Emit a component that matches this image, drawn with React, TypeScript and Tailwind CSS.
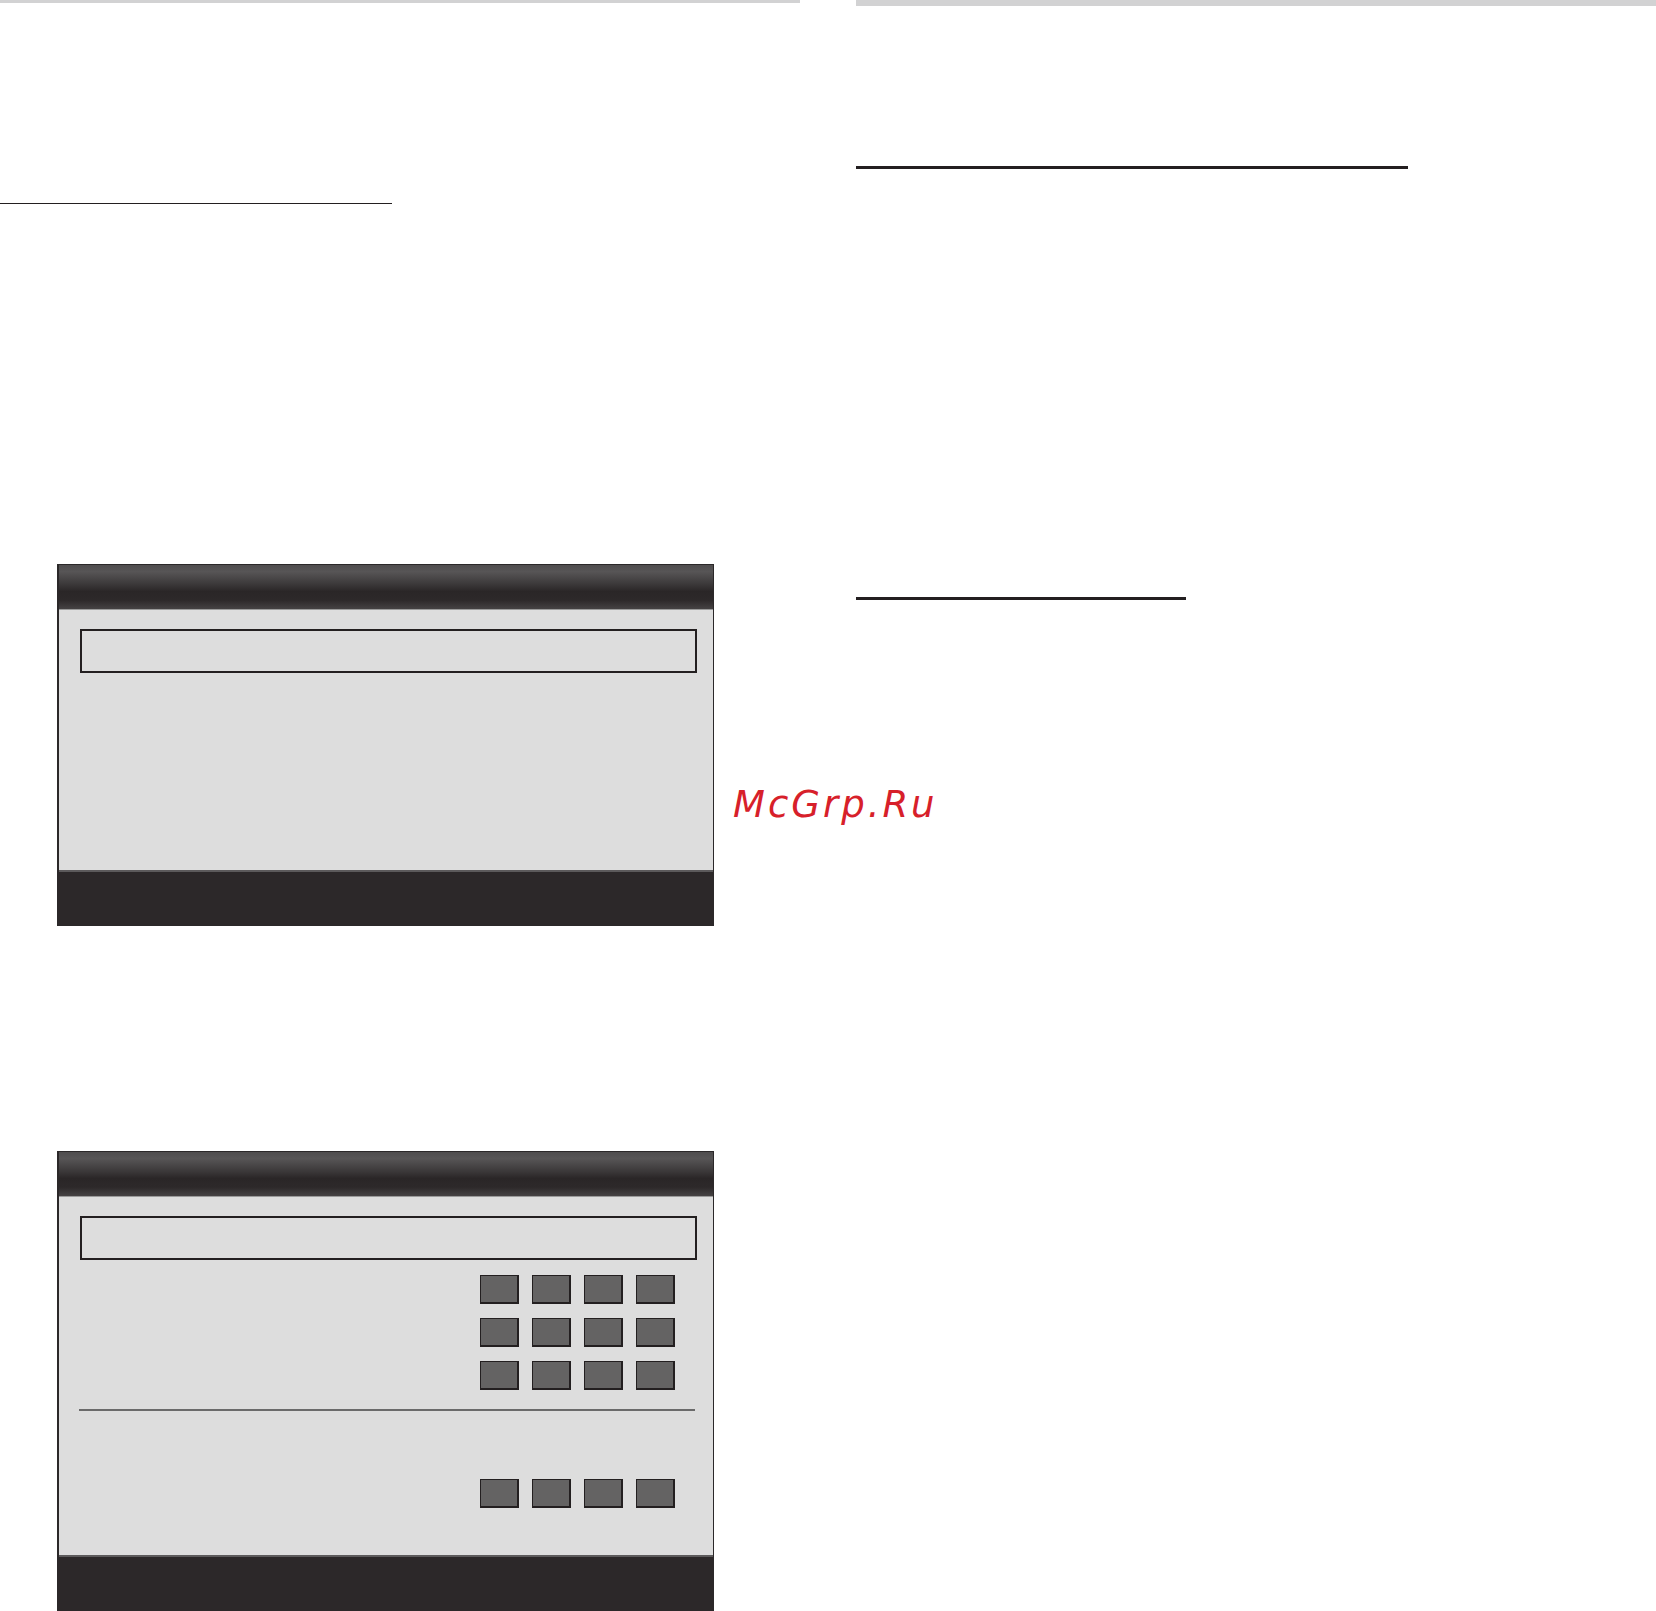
const ink = "bg-[#231f20]";

function Rule({ width, className = "" }: { width: string; className?: string }) {
  return <div className={`h-[3px] ${width} ${ink} ${className}`} />;
}

function Key() {
  return (
    <div className="h-[29px] w-[39px] border border-r-2 border-b-2 border-[#231f20] bg-[#646363]" />
  );
}

function KeyRow({ className = "" }: { className?: string }) {
  return (
    <div className={`flex justify-end gap-[13px] pr-[38px] ${className}`}>
      <Key />
      <Key />
      <Key />
      <Key />
    </div>
  );
}

function Screen({
  bodyHeight,
  children,
}: {
  bodyHeight: string;
  children: React.ReactNode;
}) {
  return (
    <div className="ml-[57px] w-[657px] border border-l-2 border-[#2b2829] bg-[#2c2829]">
      <div className="h-[44px] bg-[linear-gradient(to_bottom,#4f4d4e_0%,#575556_15%,#3a3738_45%,#2a2627_60%,#2d292a_80%,#454243_100%)]" />
      <div className={`${bodyHeight} border-t border-[#9a9a9a] bg-[#dddddd]`}>
        {children}
      </div>
      <div className="h-[55px] border-t-2 border-[#5c5a5b] bg-[#2c2829]" />
    </div>
  );
}

function InputBox({ className = "" }: { className?: string }) {
  return (
    <div
      className={`ml-[21px] h-[44px] w-[617px] border-2 border-[#231f20] ${className}`}
    />
  );
}

export default function App() {
  return (
    <div className="relative flex h-[1611px] w-[1656px] gap-[56px] overflow-hidden bg-white">
      <div className="flex w-[800px] flex-col">
        <div className="h-[6px] bg-[#d2d2d3]" />
        <Rule width="w-[392px]" className="mt-[200px]" />

        <div className="mt-[360px]">
          <Screen bodyHeight="h-[261px]">
            <InputBox className="mt-[19px]" />
          </Screen>
        </div>

        <div className="mt-[225px]">
          <Screen bodyHeight="h-[359px]">
            <InputBox className="mt-[19px]" />
            <KeyRow className="mt-[15px]" />
            <KeyRow className="mt-[14px]" />
            <KeyRow className="mt-[14px]" />
            <div className="ml-[20px] mt-[19px] h-[2px] w-[616px] bg-[#6a6a6a]" />
            <KeyRow className="mt-[68px]" />
          </Screen>
        </div>
      </div>

      <div className="flex w-[800px] flex-col">
        <div className="h-[6px] bg-[#d2d2d3]" />
        <Rule width="w-[552px]" className="mt-[160px]" />
        <Rule width="w-[330px]" className="mt-[428px]" />
      </div>

      <span className="absolute left-[733px] top-[786px] font-['DejaVu_Sans',sans-serif] text-[37px] italic leading-none tracking-[3px] text-[#d7202a]">
        McGrp.Ru
      </span>
    </div>
  );
}
